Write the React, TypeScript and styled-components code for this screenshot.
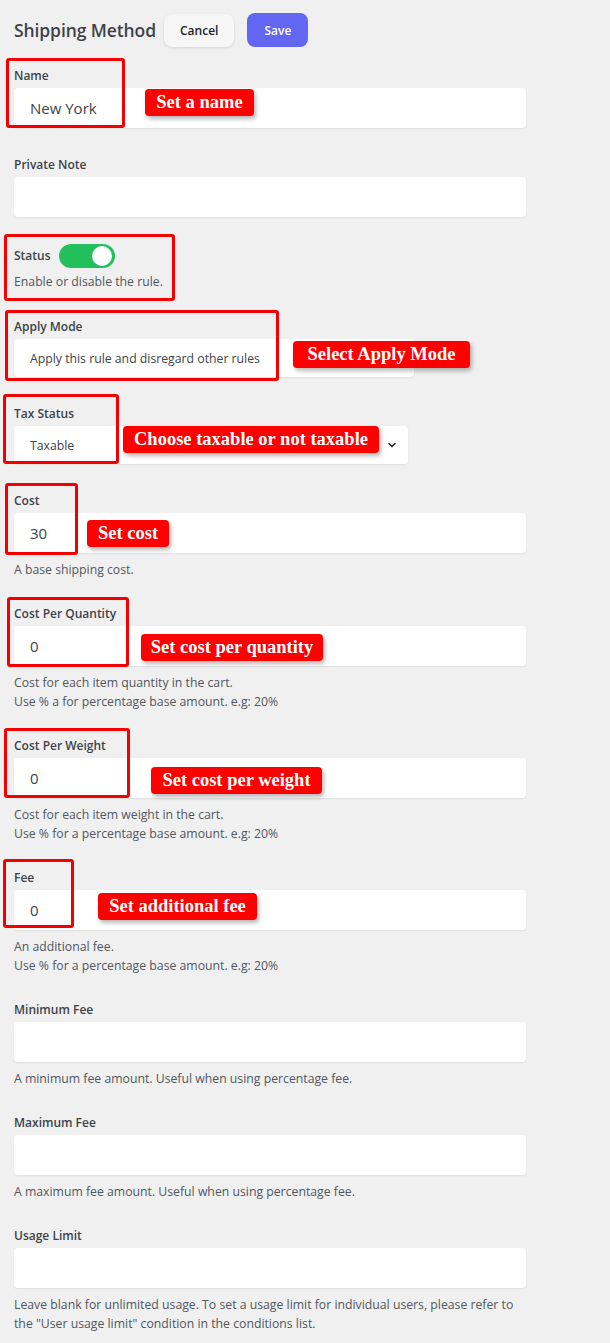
import React from "react";
import styled, { createGlobalStyle } from "styled-components";

const GlobalStyle = createGlobalStyle`
  html, body {
    margin: 0;
    padding: 0;
    background: #f0f0f1;
  }
  body {
    font-family: "Open Sans", "Noto Sans", Arial, sans-serif;
    color: #3c434a;
  }
`;

const Page = styled.div`
  width: 610px;
  min-height: 1343px;
  box-sizing: border-box;
  padding: 13px 14px 0;
`;

const Header = styled.div`
  display: flex;
  align-items: center;
  height: 34px;
  margin-bottom: 19px;
`;

const Title = styled.h1`
  margin: 0 8px 0 0;
  font-size: 17.5px;
  font-weight: 600;
  color: #3c434a;
  letter-spacing: -0.1px;
`;

const HeaderButton = styled.button<{ $primary?: boolean }>`
  height: ${(p) => (p.$primary ? 34 : 33)}px;
  padding: 0 ${(p) => (p.$primary ? 17 : 16)}px;
  margin-left: ${(p) => (p.$primary ? 13 : 0)}px;
  border: none;
  border-radius: 8px;
  font-family: inherit;
  font-size: 12px;
  font-weight: 600;
  cursor: pointer;
  background: ${(p) => (p.$primary ? "#6366f1" : "#f6f6f7")};
  color: ${(p) => (p.$primary ? "#fff" : "#1d2327")};
  box-shadow: ${(p) => (p.$primary ? "none" : "0 1px 3px rgba(0, 0, 0, 0.12)")};
`;

const Field = styled.div<{ $hasHelp?: boolean }>`
  position: relative;
  width: 512px;
  margin-bottom: ${(p) => (p.$hasHelp ? 25 : 27)}px;
`;

const Label = styled.div`
  font-size: 12px;
  line-height: 20px;
  font-weight: 600;
  color: #3c434a;
  margin-bottom: 2px;
`;

const Input = styled.div<{ $width?: number; $height?: number; $small?: boolean }>`
  display: flex;
  align-items: center;
  justify-content: space-between;
  box-sizing: border-box;
  width: ${(p) => p.$width ?? 512}px;
  height: ${(p) => p.$height ?? 40}px;
  padding: 0 10px 0 16px;
  background: #fff;
  border-radius: 4px;
  box-shadow: 0 1px 2px rgba(0, 0, 0, 0.07);
  font-size: ${(p) => (p.$small ? 12.25 : 15)}px;
  color: #3c434a;
`;

const Help = styled.div`
  margin-top: 7px;
  font-size: 12.25px;
  line-height: 19px;
  color: #50575e;
`;

const StatusRow = styled.div`
  display: flex;
  align-items: center;
  gap: 8px;
  height: 24px;
`;

const Toggle = styled.div<{ $on?: boolean }>`
  position: relative;
  width: 56px;
  height: 24px;
  border-radius: 12px;
  background: ${(p) => (p.$on ? "#22c05d" : "#c3c4c7")};

  &::after {
    content: "";
    position: absolute;
    top: 2px;
    right: ${(p) => (p.$on ? 3 : 33)}px;
    width: 20px;
    height: 20px;
    border-radius: 50%;
    background: #fff;
  }
`;

const StatusLabel = styled(Label)`
  margin: 0;
  line-height: 16px;
`;

const StatusHelp = styled(Help)`
  margin-top: 4px;
  padding-bottom: 1px;
`;

const MarkBox = styled.div`
  position: absolute;
  box-sizing: border-box;
  border: 3px solid #f50000;
  border-radius: 3px;
  pointer-events: none;
`;

const MarkTag = styled.div`
  position: absolute;
  box-sizing: border-box;
  height: 27px;
  padding: 0 6px;
  display: flex;
  align-items: center;
  justify-content: center;
  background: #ff0000;
  border-radius: 4px;
  box-shadow: 2px 3px 4px rgba(0, 0, 0, 0.28);
  font-family: "Liberation Serif", "Times New Roman", serif;
  font-weight: 700;
  font-size: 18.5px;
  color: #fff;
  white-space: nowrap;
`;

type Mark = {
  box: [number, number, number, number];
  tag?: [number, number, number];
  text?: string;
};

type FieldDef = {
  label: string;
  value?: string;
  help?: string[];
  mark?: Mark;
};

const Chevron = () => (
  <svg width="12" height="12" viewBox="0 0 24 24" fill="none" stroke="#1d2327" strokeWidth="3" strokeLinecap="round" strokeLinejoin="round">
    <path d="m6 9 6 6 6-6" />
  </svg>
);

const Annotation = ({ mark }: { mark: Mark }) => (
  <>
    <MarkBox
      style={{ left: mark.box[0], top: mark.box[1], width: mark.box[2], height: mark.box[3] }}
    />
    {mark.tag ? (
      <MarkTag style={{ left: mark.tag[0], top: mark.tag[1], width: mark.tag[2] }}>{mark.text}</MarkTag>
    ) : null}
  </>
);

const costFields: FieldDef[] = [
  {
    label: "Cost",
    value: "30",
    help: ["A base shipping cost."],
    mark: { box: [-9, -8, 73, 72], tag: [73, 29, 82], text: "Set cost" },
  },
  {
    label: "Cost Per Quantity",
    value: "0",
    help: ["Cost for each item quantity in the cart.", "Use % a for percentage base amount. e.g: 20%"],
    mark: { box: [-7, -7, 122, 70], tag: [127, 30, 182], text: "Set cost per quantity" },
  },
  {
    label: "Cost Per Weight",
    value: "0",
    help: ["Cost for each item weight in the cart.", "Use % for a percentage base amount. e.g: 20%"],
    mark: { box: [-10, -8, 126, 70], tag: [137, 31, 171], text: "Set cost per weight" },
  },
  {
    label: "Fee",
    value: "0",
    help: ["An additional fee.", "Use % for a percentage base amount. e.g: 20%"],
    mark: { box: [-11, -9, 71, 69], tag: [84, 25, 159], text: "Set additional fee" },
  },
  {
    label: "Minimum Fee",
    help: ["A minimum fee amount. Useful when using percentage fee."],
  },
  {
    label: "Maximum Fee",
    help: ["A maximum fee amount. Useful when using percentage fee."],
  },
  {
    label: "Usage Limit",
    help: [
      "Leave blank for unlimited usage. To set a usage limit for individual users, please refer to",
      "the \"User usage limit\" condition in the conditions list.",
    ],
  },
];

const TextField = ({ field }: { field: FieldDef }) => (
  <Field $hasHelp={!!field.help}>
    <Label>{field.label}</Label>
    <Input>{field.value}</Input>
    {field.help ? (
      <Help>
        {field.help.map((line) => (
          <div key={line}>{line}</div>
        ))}
      </Help>
    ) : null}
    {field.mark ? <Annotation mark={field.mark} /> : null}
  </Field>
);

const App = () => {
  return (
    <Page>
      <GlobalStyle />
      <Header>
        <Title>Shipping Method</Title>
        <HeaderButton>Cancel</HeaderButton>
        <HeaderButton $primary>Save</HeaderButton>
      </Header>

      <TextField
        field={{
          label: "Name",
          value: "New York",
          mark: { box: [-8, -8, 119, 70], tag: [131, 23, 109], text: "Set a name" },
        }}
      />
      <TextField field={{ label: "Private Note" }} />

      <Field $hasHelp>
        <StatusRow>
          <StatusLabel>Status</StatusLabel>
          <Toggle $on />
        </StatusRow>
        <StatusHelp>Enable or disable the rule.</StatusHelp>
        <Annotation mark={{ box: [-10, -10, 171, 67] }} />
      </Field>

      <Field>
        <Label>Apply Mode</Label>
        <Input $width={400} $height={38} $small>
          Apply this rule and disregard other rules
          <Chevron />
        </Input>
        <Annotation
          mark={{ box: [-9, -7, 274, 71], tag: [279, 24, 177], text: "Select Apply Mode" }}
        />
      </Field>

      <Field>
        <Label>Tax Status</Label>
        <Input $width={394} $height={38} $small>
          Taxable
          <Chevron />
        </Input>
        <Annotation
          mark={{ box: [-11, -10, 116, 70], tag: [109, 22, 256], text: "Choose taxable or not taxable" }}
        />
      </Field>

      {costFields.map((field) => (
        <TextField key={field.label} field={field} />
      ))}
    </Page>
  );
};

export default App;
